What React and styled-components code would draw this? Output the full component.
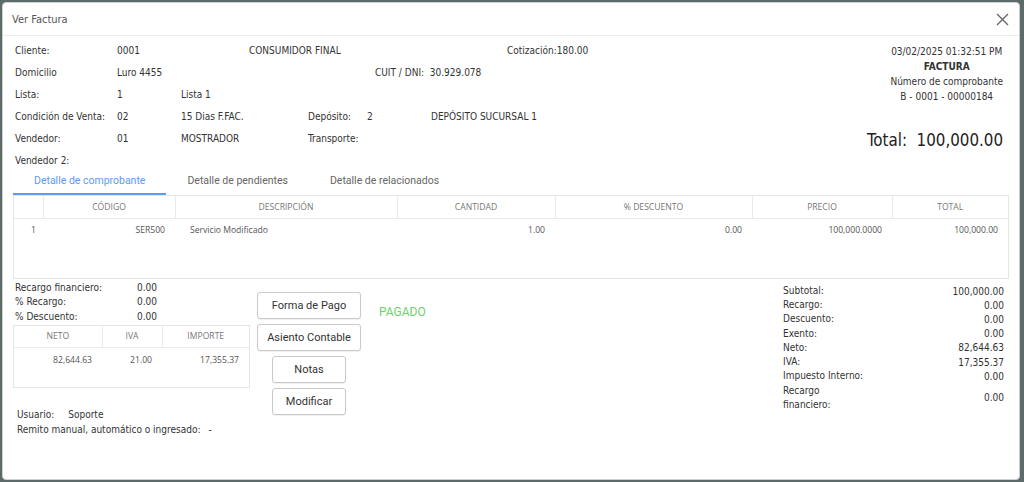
import styled, { createGlobalStyle } from 'styled-components'

const GlobalStyle = createGlobalStyle`
  html, body {
    margin: 0;
    padding: 0;
    background: #5d6a6a;
  }
  * { box-sizing: border-box; }
`

const Modal = styled.div`
  margin: 2px 4px 2px 2px;
  height: 478px;
  background: #fff;
  border: 1px solid #cfcfcf;
  border-radius: 4px;
  font-family: "DejaVu Sans Condensed", "DejaVu Sans", sans-serif;
  font-size: 10px;
  color: #333;
  overflow: hidden;
`

const Header = styled.div`
  height: 33px;
  display: flex;
  align-items: center;
  justify-content: space-between;
  padding: 1px 10px 0 9px;
  border-bottom: 1px solid #ececec;
`

const Title = styled.div`
  font-size: 11px;
  color: #555;
`

const CloseBtn = styled.button`
  border: 0;
  background: none;
  padding: 0;
  display: flex;
  cursor: pointer;
`

const Body = styled.div`
  padding: 3px 10px 0 10px;
`

const Info = styled.div`
  display: flex;
  justify-content: space-between;
`

const InfoLeft = styled.div`
  padding-left: 2px;
`

const Row = styled.div`
  display: flex;
  align-items: center;
  height: 22px;
`

const Cell = styled.div`
  width: ${(p) => (p.$w ? `${p.$w}px` : 'auto')};
  flex-shrink: 0;
  white-space: nowrap;
`

const InfoRight = styled.div`
  display: flex;
  flex-direction: column;
  align-items: flex-end;
  padding-top: 5px;
  padding-right: 6px;
`

const DocBlock = styled.div`
  display: flex;
  flex-direction: column;
  align-items: center;
  line-height: 15px;
`

const DocType = styled.div`
  font-weight: bold;
`

const Total = styled.div`
  font-size: 16.8px;
  margin-top: 26px;
  color: #222;
`

const Tabs = styled.div`
  display: flex;
  height: 24px;
  font-family: Roboto, sans-serif;
  font-size: 10.5px;
`

const Tab = styled.div`
  padding: 0 21px 3px;
  display: flex;
  align-items: center;
  color: ${(p) => (p.$active ? '#5b9cf2' : '#666')};
  border-bottom: 2px solid ${(p) => (p.$active ? '#5b9cf2' : 'transparent')};
`

const TableBox = styled.div`
  border: 1px solid #e6e6e6;
  height: 84px;
`

const Grid = styled.table`
  width: 100%;
  border-collapse: collapse;
  table-layout: fixed;
`

const Th = styled.th`
  height: 22px;
  font-family: "Open Sans", sans-serif;
  font-weight: 400;
  font-size: 8.6px;
  color: #777;
  text-transform: uppercase;
  border-right: 1px solid #eaeaea;
  border-bottom: 1px solid #eaeaea;
  padding: 0;
  &:last-child { border-right: 0; }
`

const Td = styled.td`
  font-family: "Open Sans", sans-serif;
  font-size: 8.6px;
  color: #555;
  text-align: ${(p) => p.$align || 'right'};
  padding: 2px ${(p) => (p.$align === 'left' ? '0 0 15px' : `${p.$pr || 10}px 0 0`)};
  height: 22px;
`

const Bottom = styled.div`
  display: flex;
  margin-top: 1px;
`

const LeftCol = styled.div`
  width: 237px;
  flex-shrink: 0;
`

const SumLine = styled.div`
  display: flex;
  height: 14.5px;
  align-items: center;
  padding-left: 2px;
`

const SumLabel = styled.div`
  width: 122px;
`

const SmallTable = styled.div`
  border: 1px solid #e6e6e6;
  height: 63px;
  margin-top: 1px;
`

const Footer = styled.div`
  margin-top: 19px;
  padding-left: 4px;
`

const FootLine = styled.div`
  height: 15px;
  line-height: 15px;
  white-space: nowrap;
`

const Gap = styled.span`
  display: inline-block;
  width: ${(p) => p.$w}px;
`

const Buttons = styled.div`
  width: 104px;
  margin-left: 7px;
  margin-top: 12px;
  display: flex;
  flex-direction: column;
  align-items: center;
  gap: 5px;
  flex-shrink: 0;
`

const Button = styled.button`
  width: ${(p) => (p.$small ? '74px' : '104px')};
  height: 27px;
  background: #fff;
  border: 1px solid #c9c9c9;
  border-radius: 3px;
  font-family: Roboto, sans-serif;
  font-size: 11px;
  color: #333;
  padding: 0;
  box-shadow: 0 1px 1px rgba(0, 0, 0, 0.06);
`

const Paid = styled.div`
  margin-left: 18px;
  margin-top: 25px;
  font-family: Roboto, sans-serif;
  font-size: 12px;
  color: #6dd16d;
`

const Totals = styled.div`
  margin-left: auto;
  margin-right: 5px;
  margin-top: 4px;
  width: 221px;
  display: grid;
  grid-template-columns: 90px 1fr;
  grid-auto-rows: 14.2px;
  align-items: center;
`

const TotLabel = styled.div`
  line-height: 14px;
  white-space: ${(p) => (p.$tall ? 'normal' : 'nowrap')};
  grid-row: ${(p) => (p.$tall ? 'span 2' : 'auto')};
`

const TotValue = styled.div`
  text-align: right;
  grid-row: ${(p) => (p.$tall ? 'span 2' : 'auto')};
`

const CloseIcon = () => (
  <svg width="13" height="13" viewBox="0 0 13 13">
    <path d="M1 1 L12 12 M12 1 L1 12" stroke="#666" strokeWidth="1.4" fill="none" />
  </svg>
)

const items = [
  { n: '1', code: 'SER500', desc: 'Servicio Modificado', qty: '1.00', disc: '0.00', price: '100,000.0000', total: '100,000.00' },
]

const totals = [
  ['Subtotal:', '100,000.00'],
  ['Recargo:', '0.00'],
  ['Descuento:', '0.00'],
  ['Exento:', '0.00'],
  ['Neto:', '82,644.63'],
  ['IVA:', '17,355.37'],
  ['Impuesto Interno:', '0.00'],
]

export default function App() {
  return (
    <>
      <GlobalStyle />
      <Modal>
        <Header>
          <Title>Ver Factura</Title>
          <CloseBtn><CloseIcon /></CloseBtn>
        </Header>
        <Body>
          <Info>
            <InfoLeft>
              <Row>
                <Cell $w={102}>Cliente:</Cell>
                <Cell $w={132}>0001</Cell>
                <Cell $w={258}>CONSUMIDOR FINAL</Cell>
                <Cell>Cotización:180.00</Cell>
              </Row>
              <Row>
                <Cell $w={102}>Domicilio</Cell>
                <Cell $w={258}>Luro 4455</Cell>
                <Cell>CUIT / DNI:&nbsp; 30.929.078</Cell>
              </Row>
              <Row>
                <Cell $w={102}>Lista:</Cell>
                <Cell $w={64}>1</Cell>
                <Cell>Lista 1</Cell>
              </Row>
              <Row>
                <Cell $w={102}>Condición de Venta:</Cell>
                <Cell $w={64}>02</Cell>
                <Cell $w={127}>15 Dias F.FAC.</Cell>
                <Cell $w={59}>Depósito:</Cell>
                <Cell $w={64}>2</Cell>
                <Cell>DEPÓSITO SUCURSAL 1</Cell>
              </Row>
              <Row>
                <Cell $w={102}>Vendedor:</Cell>
                <Cell $w={64}>01</Cell>
                <Cell $w={127}>MOSTRADOR</Cell>
                <Cell>Transporte:</Cell>
              </Row>
              <Row>
                <Cell>Vendedor 2:</Cell>
              </Row>
            </InfoLeft>
            <InfoRight>
              <DocBlock>
                <div>03/02/2025 01:32:51 PM</div>
                <DocType>FACTURA</DocType>
                <div>Número de comprobante</div>
                <div>B - 0001 - 00000184</div>
              </DocBlock>
              <Total>Total:&nbsp; 100,000.00</Total>
            </InfoRight>
          </Info>

          <Tabs>
            <Tab $active>Detalle de comprobante</Tab>
            <Tab>Detalle de pendientes</Tab>
            <Tab>Detalle de relacionados</Tab>
          </Tabs>

          <TableBox>
            <Grid>
              <colgroup>
                <col style={{ width: 29 }} />
                <col style={{ width: 132 }} />
                <col style={{ width: 222 }} />
                <col style={{ width: 158 }} />
                <col style={{ width: 197 }} />
                <col style={{ width: 140 }} />
                <col />
              </colgroup>
              <thead>
                <tr>
                  <Th />
                  <Th>Código</Th>
                  <Th>Descripción</Th>
                  <Th>Cantidad</Th>
                  <Th>% Descuento</Th>
                  <Th>Precio</Th>
                  <Th>Total</Th>
                </tr>
              </thead>
              <tbody>
                {items.map((it) => (
                  <tr key={it.n}>
                    <Td $pr={7}>{it.n}</Td>
                    <Td>{it.code}</Td>
                    <Td $align="left">{it.desc}</Td>
                    <Td>{it.qty}</Td>
                    <Td>{it.disc}</Td>
                    <Td>{it.price}</Td>
                    <Td>{it.total}</Td>
                  </tr>
                ))}
              </tbody>
            </Grid>
          </TableBox>

          <Bottom>
            <LeftCol>
              <SumLine><SumLabel>Recargo financiero:</SumLabel>0.00</SumLine>
              <SumLine><SumLabel>% Recargo:</SumLabel>0.00</SumLine>
              <SumLine><SumLabel>% Descuento:</SumLabel>0.00</SumLine>
              <SmallTable>
                <Grid>
                  <colgroup>
                    <col style={{ width: 88 }} />
                    <col style={{ width: 60 }} />
                    <col />
                  </colgroup>
                  <thead>
                    <tr>
                      <Th>Neto</Th>
                      <Th>IVA</Th>
                      <Th>Importe</Th>
                    </tr>
                  </thead>
                  <tbody>
                    <tr>
                      <Td>82,644.63</Td>
                      <Td>21.00</Td>
                      <Td>17,355.37</Td>
                    </tr>
                  </tbody>
                </Grid>
              </SmallTable>
              <Footer>
                <FootLine>Usuario:<Gap $w={14} />Soporte</FootLine>
                <FootLine>Remito manual, automático o ingresado:<Gap $w={8} />-</FootLine>
              </Footer>
            </LeftCol>

            <Buttons>
              <Button>Forma de Pago</Button>
              <Button>Asiento Contable</Button>
              <Button $small>Notas</Button>
              <Button $small>Modificar</Button>
            </Buttons>

            <Paid>PAGADO</Paid>

            <Totals>
              {totals.map(([l, v]) => (
                <>
                  <TotLabel key={l}>{l}</TotLabel>
                  <TotValue key={l + 'v'}>{v}</TotValue>
                </>
              ))}
              <TotLabel $tall>Recargo<br />financiero:</TotLabel>
              <TotValue $tall>0.00</TotValue>
            </Totals>
          </Bottom>
        </Body>
      </Modal>
    </>
  )
}
